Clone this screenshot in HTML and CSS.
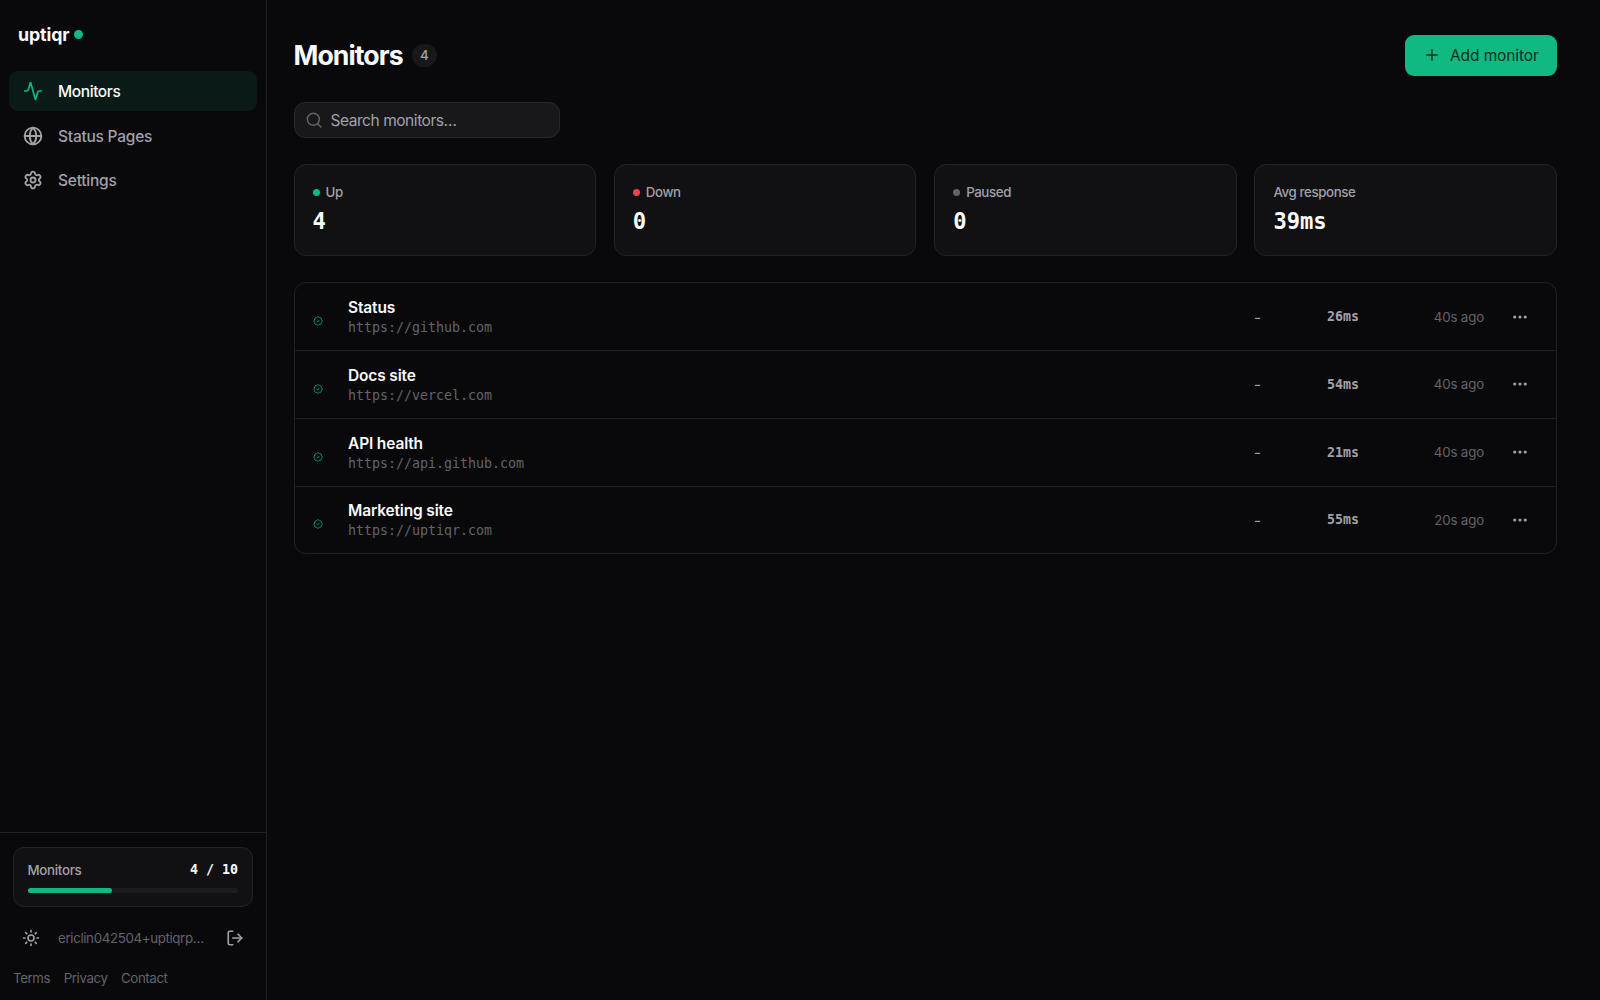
FILE: index.html
```html
<!DOCTYPE html>
<html lang="en">
<head>
  <meta charset="UTF-8" />
  <title>Monitors - uptiqr</title>
  <link rel="stylesheet" href="styles.css">
</head>
<body>

<svg class="sprite" aria-hidden="true">
  <symbol id="check" viewBox="0 0 24 24">
    <path d="M3.85 8.62a4 4 0 0 1 4.78-4.77 4 4 0 0 1 6.74 0 4 4 0 0 1 4.78 4.78 4 4 0 0 1 0 6.74 4 4 0 0 1-4.77 4.78 4 4 0 0 1-6.75 0 4 4 0 0 1-4.78-4.77 4 4 0 0 1 0-6.76Z"/><path d="m9 12 2 2 4-4"/>
  </symbol>
  <symbol id="dots" viewBox="0 0 24 24">
    <circle cx="12" cy="12" r="1"/><circle cx="19" cy="12" r="1"/><circle cx="5" cy="12" r="1"/>
  </symbol>
</svg>

<div class="app">
  <aside class="sidebar">
    <div class="logo"><span>uptiqr</span><i class="logo-dot"></i></div>
    <nav class="nav">
      <a class="nav-item active">
        <svg class="icon" viewBox="0 0 24 24"><path d="M22 12h-2.48a2 2 0 0 0-1.93 1.46l-2.35 8.36a.25.25 0 0 1-.48 0L9.24 2.18a.25.25 0 0 0-.48 0l-2.35 8.36A2 2 0 0 1 4.49 12H2"/></svg>
        <span>Monitors</span>
      </a>
      <a class="nav-item">
        <svg class="icon" viewBox="0 0 24 24"><circle cx="12" cy="12" r="10"/><path d="M12 2a14.5 14.5 0 0 0 0 20 14.5 14.5 0 0 0 0-20"/><path d="M2 12h20"/></svg>
        <span>Status Pages</span>
      </a>
      <a class="nav-item">
        <svg class="icon" viewBox="0 0 24 24"><path d="M9.671 4.136a2.34 2.34 0 0 1 4.659 0 2.34 2.34 0 0 0 3.319 1.915 2.34 2.34 0 0 1 2.33 4.033 2.34 2.34 0 0 0 0 3.831 2.34 2.34 0 0 1-2.33 4.033 2.34 2.34 0 0 0-3.319 1.915 2.34 2.34 0 0 1-4.659 0 2.34 2.34 0 0 0-3.32-1.915 2.34 2.34 0 0 1-2.33-4.033 2.34 2.34 0 0 0 0-3.831A2.34 2.34 0 0 1 6.35 6.051a2.34 2.34 0 0 0 3.319-1.915"/><circle cx="12" cy="12" r="3"/></svg>
        <span>Settings</span>
      </a>
    </nav>

    <div class="side-bottom">
      <div class="usage">
        <div class="usage-row"><span>Monitors</span><b>4 / 10</b></div>
        <div class="bar"><div class="bar-fill" style="width: 40%"></div></div>
      </div>
      <div class="user">
        <svg class="icon" viewBox="0 0 24 24"><circle cx="12" cy="12" r="4"/><path d="M12 2v2M12 20v2M4.93 4.93l1.41 1.41M17.66 17.66l1.41 1.41M2 12h2M20 12h2M6.34 17.66l-1.41 1.41M19.07 4.93l-1.41 1.41"/></svg>
        <span class="email">ericlin042504+uptiqrp…</span>
        <svg class="icon" viewBox="0 0 24 24"><path d="M9 21H5a2 2 0 0 1-2-2V5a2 2 0 0 1 2-2h4"/><path d="m16 17 5-5-5-5"/><path d="M21 12H9"/></svg>
      </div>
      <div class="legal"><a>Terms</a><a>Privacy</a><a>Contact</a></div>
    </div>
  </aside>

  <main class="main">
    <header class="header">
      <h1>Monitors</h1>
      <span class="count">4</span>
      <button class="add">
        <svg class="icon" viewBox="0 0 24 24"><path d="M5 12h14M12 5v14"/></svg>
        <span>Add monitor</span>
      </button>
    </header>

    <div class="search">
      <svg class="icon" viewBox="0 0 24 24"><circle cx="11" cy="11" r="9"/><path d="m22.5 22.5-5-5"/></svg>
      <span>Search monitors…</span>
    </div>

    <section class="stats">
      <div class="stat"><div class="label"><i class="dot up"></i>Up</div><div class="value">4</div></div>
      <div class="stat"><div class="label"><i class="dot down"></i>Down</div><div class="value">0</div></div>
      <div class="stat"><div class="label"><i class="dot paused"></i>Paused</div><div class="value">0</div></div>
      <div class="stat"><div class="label">Avg response</div><div class="value">39ms</div></div>
    </section>

    <section class="list">
      <div class="row">
        <svg class="icon check"><use href="#check"/></svg>
        <div class="site"><div class="name">Status</div><div class="url">https://github.com</div></div>
        <span class="uptime">–</span><span class="ms">26ms</span><span class="ago">40s ago</span>
        <svg class="icon more"><use href="#dots"/></svg>
      </div>
      <div class="row">
        <svg class="icon check"><use href="#check"/></svg>
        <div class="site"><div class="name">Docs site</div><div class="url">https://vercel.com</div></div>
        <span class="uptime">–</span><span class="ms">54ms</span><span class="ago">40s ago</span>
        <svg class="icon more"><use href="#dots"/></svg>
      </div>
      <div class="row">
        <svg class="icon check"><use href="#check"/></svg>
        <div class="site"><div class="name">API health</div><div class="url">https://api.github.com</div></div>
        <span class="uptime">–</span><span class="ms">21ms</span><span class="ago">40s ago</span>
        <svg class="icon more"><use href="#dots"/></svg>
      </div>
      <div class="row">
        <svg class="icon check"><use href="#check"/></svg>
        <div class="site"><div class="name">Marketing site</div><div class="url">https://uptiqr.com</div></div>
        <span class="uptime">–</span><span class="ms">55ms</span><span class="ago">20s ago</span>
        <svg class="icon more"><use href="#dots"/></svg>
      </div>
    </section>
  </main>
</div>

</body>
</html>
```
FILE: styles.css
```css
* { box-sizing: border-box; }
body { margin: 0; background: #09090b; color: #fafafa; font-family: Inter, "Liberation Sans", sans-serif; font-size: 15.5px; line-height: 20px; letter-spacing: -0.4px; }
.sprite { display: none; }
.icon { width: 20px; height: 20px; flex: none; fill: none; stroke: currentColor; stroke-width: 2.2; stroke-linecap: round; stroke-linejoin: round; }
.app { display: flex; height: 1000px; }

/* sidebar */
.sidebar { width: 266.5px; flex: none; display: flex; flex-direction: column; border-right: 1px solid #212124; }
.logo { display: flex; align-items: center; gap: 4.5px; height: 71px; padding: 0 0 2px 18px; font-size: 17.8px; font-weight: 700; letter-spacing: -0.12px; }
.logo-dot { width: 9px; height: 9px; border-radius: 50%; background: #10b981; }
.nav { display: flex; flex-direction: column; gap: 4.6px; padding: 0 8.5px 0 9px; }
.nav-item { display: flex; align-items: center; gap: 15px; height: 40px; padding: 0 14px; border-radius: 9px; color: #a1a1aa; font-weight: 500; letter-spacing: -0.24px; }
.nav-item span { padding-top: 2px; }
.nav-item.active { background: #0a1a17; color: #fafafa; letter-spacing: -0.4px; }
.nav-item.active span { padding-top: 1px; }
.nav-item.active .icon { color: #10b981; stroke-width: 2; }

.side-bottom { margin-top: auto; height: 168px; padding: 14px 13px 13px; border-top: 1px solid #212124; }
.usage { height: 60px; padding: 12px 13.5px 0; border: 1px solid #242427; border-radius: 11px; background: #111113; font-size: 13.3px; letter-spacing: -0.3px; }
.usage-row { display: flex; justify-content: space-between; color: #a1a1aa; font-weight: 500; }
.usage-row b { color: #fafafa; font-family: "DejaVu Sans Mono", monospace; letter-spacing: 0; }
.bar { height: 5px; margin-top: 7.5px; border-radius: 3px; background: #1c1c1f; }
.bar-fill { height: 5px; border-radius: 3px; background: #10b981; }
.user { display: flex; align-items: center; height: 36px; margin-top: 13px; padding: 0 9px; color: #a1a1aa; }
.user .icon { width: 18px; height: 18px; }
.email { width: 151px; margin: 0 17px 0 18px; color: #63636b; font-size: 13.3px; white-space: nowrap; letter-spacing: -0.35px; }
.legal { display: flex; gap: 13.5px; margin-top: 12px; color: #63636b; font-size: 13.3px; letter-spacing: -0.4px; }

/* content */
.main { flex: 1; padding: 35px 43px 0 27px; }
.header { display: flex; align-items: center; height: 40.5px; }
h1 { margin: 0; padding-bottom: 1px; font-size: 26.7px; font-weight: 700; letter-spacing: -0.95px; line-height: 32px; }
.count { width: 25px; height: 23px; margin-left: 9px; border-radius: 12px; background: #18181b; color: #a1a1aa; font-size: 13.3px; font-weight: 500; line-height: 23px; text-align: center; }
.add { display: flex; align-items: center; gap: 9px; width: 152px; height: 40.5px; margin-left: auto; padding: 0 18px; border: 0; border-radius: 9px; background: #10b981; color: #052e1f; font: 400 15.5px Inter, sans-serif; letter-spacing: -0.1px; white-space: nowrap; }
.add .icon { width: 18px; height: 18px; stroke-width: 1.8; }
.search { display: flex; align-items: center; gap: 9px; width: 266.5px; height: 36px; margin-top: 26.5px; padding: 0 11px; border: 1px solid #29292c; border-radius: 11px; background: #18181b; color: #a1a1aa; }
.search span { padding-top: 1px; letter-spacing: -0.45px; }
.search .icon { width: 16px; height: 16px; color: #63636b; }

.stats { display: grid; grid-template-columns: repeat(4, 1fr); gap: 17.8px; margin-top: 26px; }
.stat { height: 91.5px; padding: 17px 18px; border: 1px solid #242427; border-radius: 12px; background: #111113; }
.label { display: flex; align-items: center; gap: 6px; color: #a1a1aa; font-size: 13.3px; font-weight: 500; letter-spacing: -0.4px; }
.dot { width: 7px; height: 7px; border-radius: 50%; }
.up { background: #10b981; }
.down { background: #ef4444; }
.paused { background: #63636b; }
.value { margin-top: 5px; font: 700 22.2px/28px "DejaVu Sans Mono", monospace; letter-spacing: -0.1px; }

.list { margin-top: 26.5px; border: 1px solid #212124; border-radius: 12px; }
.row { display: flex; align-items: center; height: 67.8px; padding-left: 18px; border-top: 1px solid #212124; }
.row:first-child { height: 67px; border-top: 0; }
.check { width: 10px; height: 10px; margin-top: 9px; color: #10b981; opacity: 0.9; }
.site { flex: 1; margin-left: 25.5px; padding-top: 3px; }
.name { font-weight: 600; letter-spacing: -0.15px; }
.url { color: #63636b; font: 13.3px/20px "DejaVu Sans Mono", monospace; letter-spacing: 0; }
.uptime, .ms { font-size: 13.3px; color: #a1a1aa; letter-spacing: 0; }
.uptime { width: 8px; font-size: 10px; font-weight: 700; text-align: center; }
.ms { width: 97.5px; padding-top: 1px; font-family: "DejaVu Sans Mono", monospace; font-weight: 700; text-align: right; }
.ago { width: 125px; color: #63636b; font-size: 13.3px; text-align: right; letter-spacing: -0.15px; }
.more { width: 18px; height: 18px; margin: 0 27px; color: #a1a1aa; }
```
